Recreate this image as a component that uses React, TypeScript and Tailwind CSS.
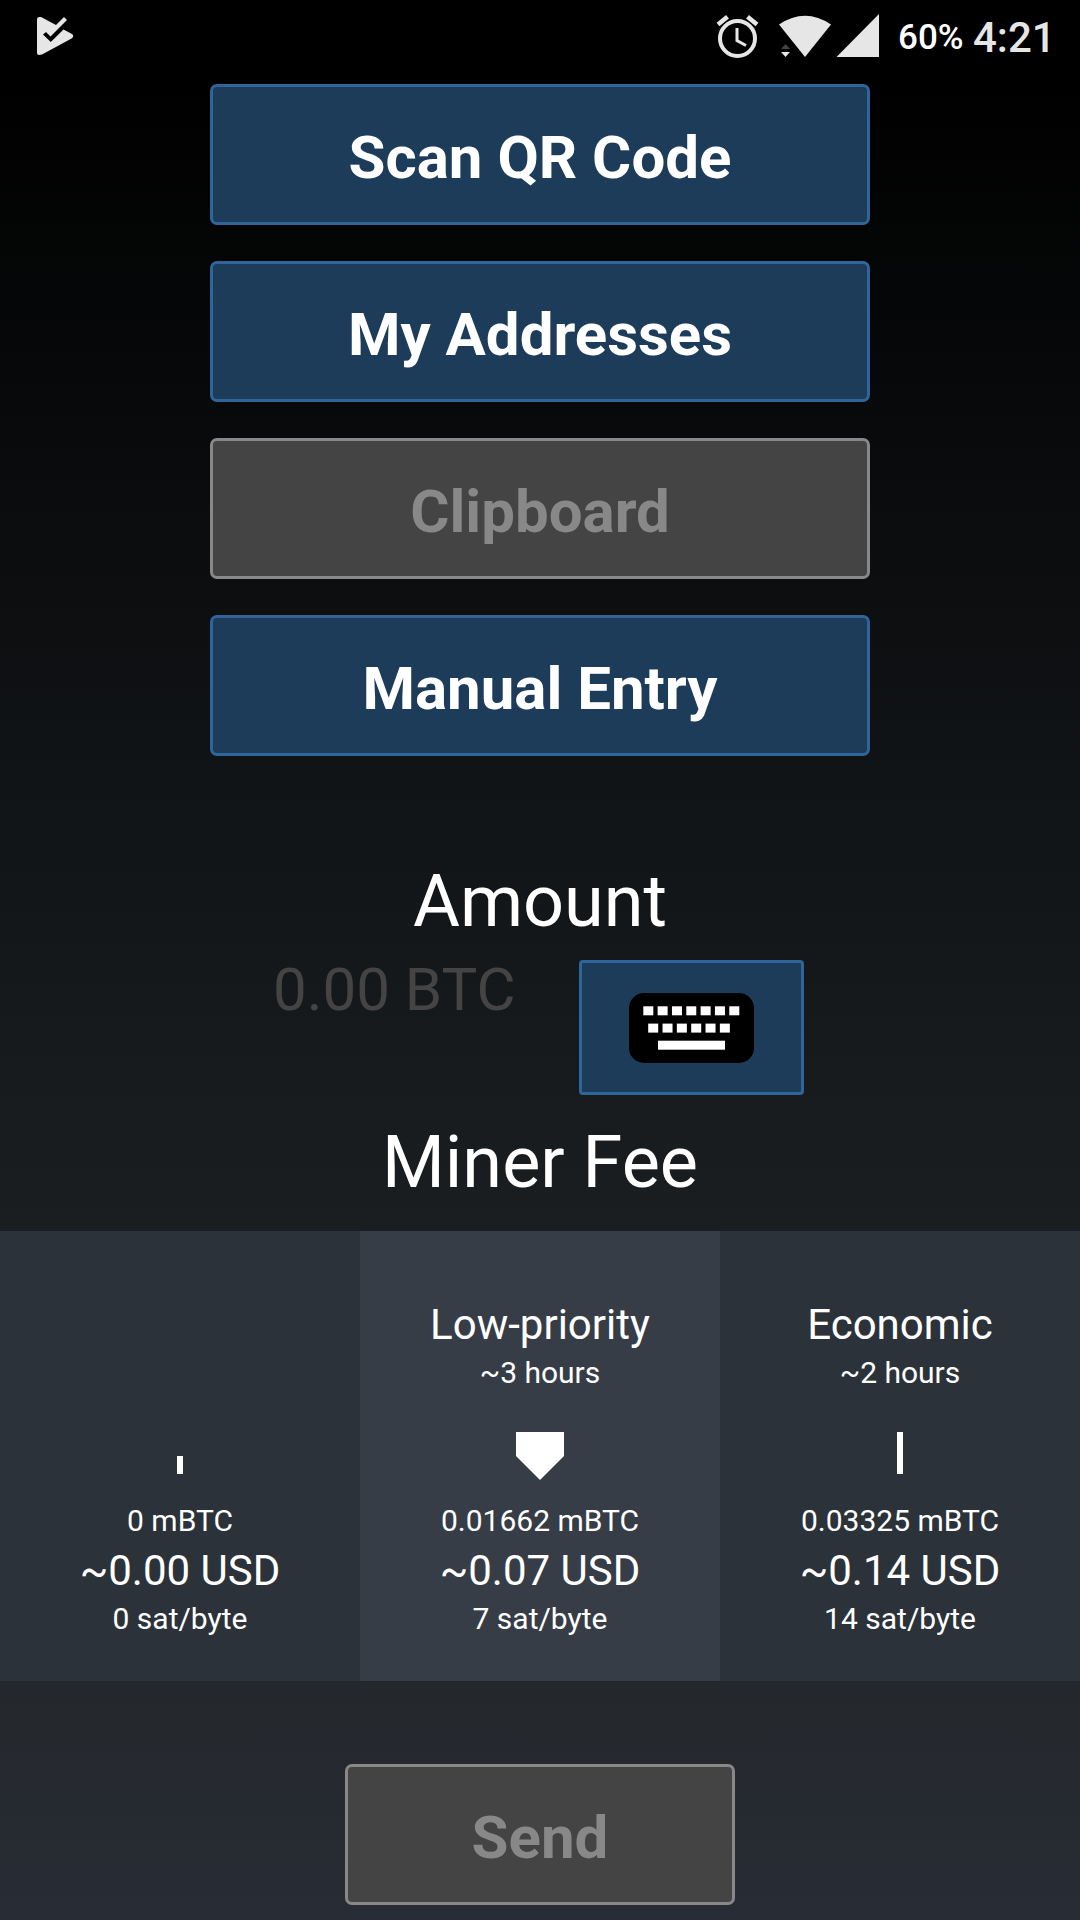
import React from "react";

function Action({ label, disabled = false }: { label: string; disabled?: boolean }) {
  return (
    <button className={`flex h-[141px] w-[660px] shrink-0 items-center justify-center rounded-[7px] border-[3px] pt-[6px] text-[60px] leading-[70px] font-bold ${disabled ? "border-[#888888] bg-[#444444] text-[#888888]" : "border-[#2f659b] bg-[#1d3c5a] text-white"}`}>
      {label}
    </button>
  );
}

function Marker({ kind }: { kind: string }) {
  return (
    <svg width="60" height="50" viewBox="0 0 60 50" fill="#fff">
      {kind === "low" && <path d="M6 2H54V26L30 50L6 26Z" />}
      {kind === "zero" && <path d="M27 26H33V44H27Z" />}
      {kind === "eco" && <path d="M27 2H33V44H27Z" />}
    </svg>
  );
}

function KeyboardIcon() {
  return (
    <svg width="125" height="70" viewBox="0 0 125 70">
      <rect width="125" height="70" rx="15" fill="#000" />
      <g fill="#fff">
        {[0, 1, 2, 3, 4, 5, 6].map((i) => <rect key={i} x={14.3 + i * 14.33} y="13.3" width="10" height="9" />)}
        {[0, 1, 2, 3, 4, 5].map((i) => <rect key={i} x={19.2 + i * 14.33} y="30.6" width="10" height="9" />)}
        <rect x="29" y="47.7" width="67" height="9" />
      </g>
    </svg>
  );
}

function StatusBar() {
  return (
    <header className="flex h-[72px] shrink-0 items-start bg-black text-[#e6e6e6]">
      <svg className="ml-[36px]" width="38" height="72" viewBox="36 0 38 72">
        <path d="M37 19.5Q37 17 39 17H41L56 25L64 17L67 20L50.5 36.5L46 32L43 34.5L50.8 42L63.5 29.5L72 34Q74.5 36 72 38.2L42 54.6L39 55Q37 55 37 52.5Z" fill="#e6e6e6" />
      </svg>
      <svg className="ml-[641px]" width="165" height="72" viewBox="715 0 165 72">
        <g fill="none" stroke="#e6e6e6">
          <circle cx="737.5" cy="38.5" r="17.5" strokeWidth="4" />
          <path d="M737 28V40.5L746 45.5" strokeWidth="3" />
          <path d="M718 24.5L727.5 16.8M757 24.5L747.5 16.8" strokeWidth="4.5" />
        </g>
        <path d="M779 24.5Q805 7 831 24.5L805 57Z" fill="#e6e6e6" />
        <path d="M781 49L785.5 44L790 49Z" fill="#444" />
        <path d="M781 52H790L785.5 57Z" fill="#e6e6e6" />
        <path d="M879 14V57H836.5Z" fill="#e6e6e6" />
      </svg>
      <span className="ml-[18px] mt-[17px] w-[75px] text-[35px] leading-[42px] font-medium text-white">60%</span>
      <span className="mt-[14px] text-[42px] leading-[48px] font-medium">4:21</span>
    </header>
  );
}

const fees = [
  { kind: "zero", title: "", time: "", btc: "0 mBTC", usd: "~0.00 USD", rate: "0 sat/byte", bg: "bg-[#2c3239]" },
  { kind: "low", title: "Low-priority", time: "~3 hours", btc: "0.01662 mBTC", usd: "~0.07 USD", rate: "7 sat/byte", bg: "bg-[#373d47]" },
  { kind: "eco", title: "Economic", time: "~2 hours", btc: "0.03325 mBTC", usd: "~0.14 USD", rate: "14 sat/byte", bg: "bg-[#2c3239]" },
];

export default function App() {
  return (
    <main className="flex h-[1920px] w-[1080px] flex-col overflow-hidden bg-[linear-gradient(to_bottom,#000_72px,#131619_880px,#1a1e21_1220px,#24282c_1690px,#282c35_1920px)] font-[Roboto,sans-serif] text-white">
      <StatusBar />
      <section className="mt-3 flex flex-col items-center gap-9">
        <Action label="Scan QR Code" />
        <Action label="My Addresses" />
        <Action label="Clipboard" disabled />
        <Action label="Manual Entry" />
      </section>
      <h2 className="mt-[104px] text-center text-[72px] leading-[84px]">Amount</h2>
      <section className="mt-4 flex h-[135px] pl-[273px]">
        <div className="w-[306px] text-[60px] leading-[60px] text-[#444]">0.00 BTC</div>
        <button className="flex h-[135px] w-[225px] items-center justify-center rounded-[4px] border-[3px] border-[#2f659b] bg-[#1d3c5a]">
          <KeyboardIcon />
        </button>
      </section>
      <h2 className="mt-[26px] text-center text-[72px] leading-[84px]">Miner Fee</h2>
      <section className="mt-[26px] grid h-[450px] grid-cols-3">
        {fees.map((f) => (
          <div key={f.kind} className={`flex flex-col items-center pt-[69px] ${f.bg}`}>
            <div className="h-[50px] text-[42px] leading-[50px]">{f.title}</div>
            <div className="h-[44px] pt-px text-[30px] leading-[44px]">{f.time}</div>
            <div className="mt-[36px] h-[50px]"><Marker kind={f.kind} /></div>
            <div className="mt-[20px] text-[30px] leading-[42px]">{f.btc}</div>
            <div className="pt-px text-[42px] leading-[56px]">{f.usd}</div>
            <div className="-mt-px text-[30px] leading-[42px]">{f.rate}</div>
          </div>
        ))}
      </section>
      <button className="mx-auto mt-[83px] flex h-[141px] w-[390px] shrink-0 items-center justify-center rounded-[7px] border-[3px] border-[#888] bg-[#444] pt-[6px] text-[60px] leading-[70px] font-bold text-[#888]">Send</button>
    </main>
  );
}
